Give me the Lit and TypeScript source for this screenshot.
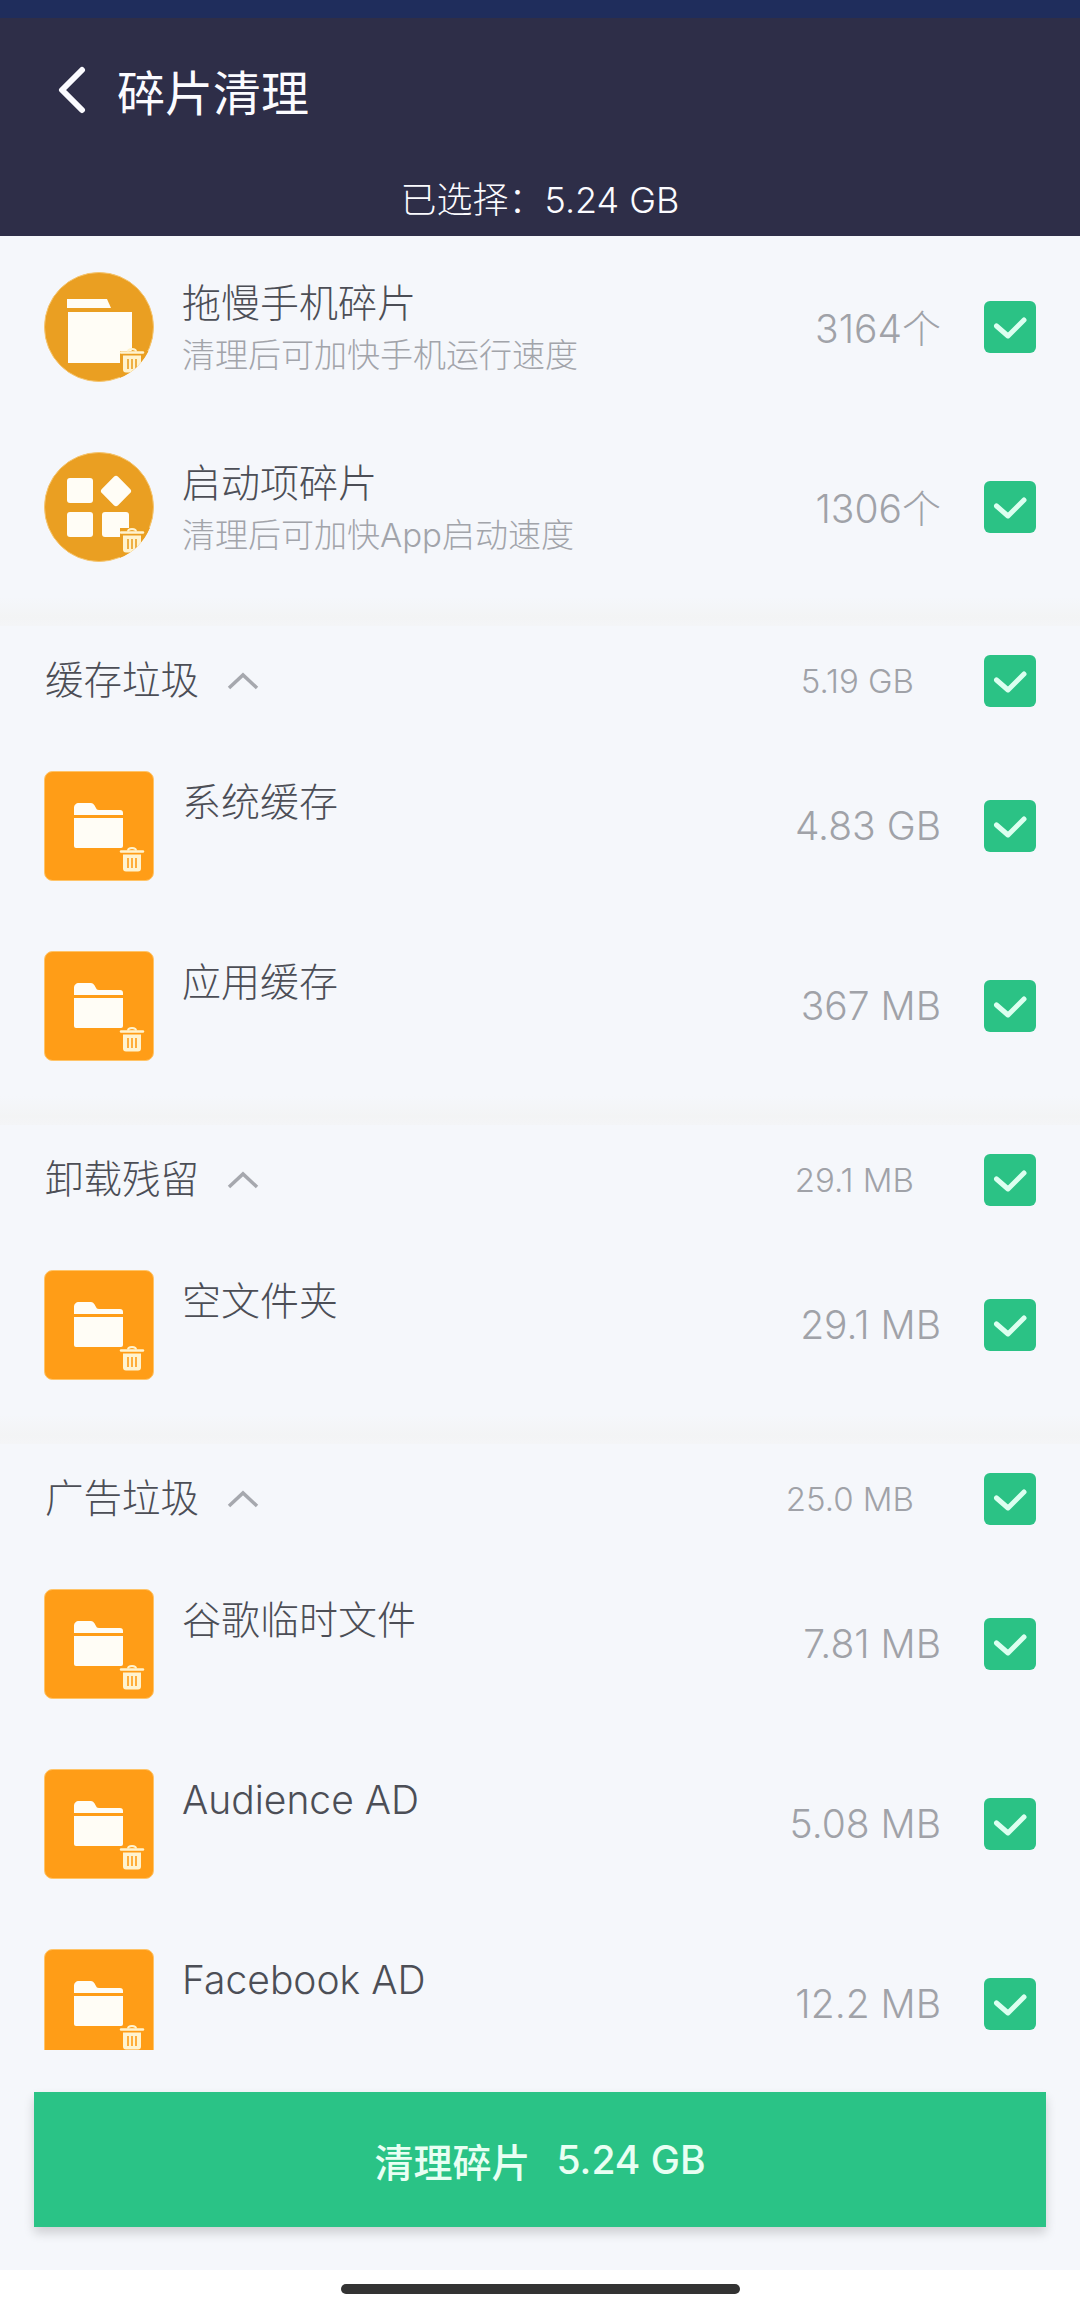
import { LitElement, html, css, svg } from "lit";
import { customElement } from "lit/decorators.js";

const trash = (fill: string, stripe: string) => svg`
  <path d="M77 80.500h22" stroke="${fill}" stroke-width="2.400" stroke-linecap="round" fill="none"/>
  <path d="M84 79.500c0-3.500 8-3.500 8 0" stroke="${fill}" stroke-width="2" fill="none"/>
  <path d="M79 83.500h18v14a3 3 0 0 1-3 3H82a3 3 0 0 1-3-3z" fill="${fill}"/>
  <path d="M84 87v10M88 87v10M92 87v10" stroke="${stripe}" stroke-width="1.600" fill="none"/>`;

const squareIcon = svg`
  <rect x=".5" y=".5" width="109" height="109" rx="8" fill="#ff9d17" stroke="#ffc468"/>
  <path d="M30 44v-7c0-3 2-5 5-5h11c3 0 4 1 6 5 .5 1 1 2 3 2h21c2 0 3 1 3 3v2H30z" fill="#fffdf6"/>
  <path d="M30 47h49v28a2 2 0 0 1-2 2H32a2 2 0 0 1-2-2z" fill="#fffdf6"/>
  ${trash("#fff3cf", "#ff9d17")}`;

const circleClip = svg`<clipPath id="c"><circle cx="55" cy="55" r="55"/></clipPath>`;

const folderCircle = svg`
  ${circleClip}
  <circle cx="55" cy="55" r="54.500" fill="#ea9f22" stroke="#f5c56f"/>
  <path d="M23 27h40l4 9H23z" fill="#fffdf6"/>
  <path d="M24 40h64v38l-10 13H24z" fill="#fffdf6"/>
  <g clip-path="url(#c)"><path d="M76 79h30v31H76z" fill="#ea9f22"/>${trash("#fff3cf", "#ea9f22")}</g>`;

const gridCircle = svg`
  ${circleClip}
  <circle cx="55" cy="55" r="54.500" fill="#ea9f22" stroke="#f5c56f"/>
  <rect x="23" y="26" width="26" height="25" rx="3" fill="#fffdf6"/>
  <rect x="60.500" y="27.500" width="23" height="23" rx="3" transform="rotate(45 72 39)" fill="#fffdf6"/>
  <rect x="23" y="60" width="26" height="25" rx="3" fill="#fffdf6"/>
  <rect x="58" y="60" width="27" height="25" rx="3" fill="#fffdf6"/>
  <g clip-path="url(#c)"><path d="M76 76h30v30H76z" fill="#ea9f22"/>${trash("#fff3cf", "#ea9f22")}</g>`;

const check = html`<span class="check"><svg width="52" height="52" viewBox="0 0 52 52"><path d="M12.500 25L24 35l16-16" fill="none" stroke="#dcfff0" stroke-width="5" stroke-linecap="round" stroke-linejoin="round"/></svg></span>`;

interface Item { title: string; sub?: string; value: string; icon: unknown }
interface Section { title: string; value: string; items: Item[] }

const sections: Section[] = [
  { title: "缓存垃圾", value: "5.19 GB", items: [
    { title: "系统缓存", value: "4.83 GB", icon: squareIcon },
    { title: "应用缓存", value: "367 MB", icon: squareIcon },
  ]},
  { title: "卸载残留", value: "29.1 MB", items: [
    { title: "空文件夹", value: "29.1 MB", icon: squareIcon },
  ]},
  { title: "广告垃圾", value: "25.0 MB", items: [
    { title: "谷歌临时文件", value: "7.81 MB", icon: squareIcon },
    { title: "Audience AD", value: "5.08 MB", icon: squareIcon },
    { title: "Facebook AD", value: "12.2 MB", icon: squareIcon },
  ]},
];

const topItems: Item[] = [
  { title: "拖慢手机碎片", sub: "清理后可加快手机运行速度", value: "3164个", icon: folderCircle },
  { title: "启动项碎片", sub: "清理后可加快App启动速度", value: "1306个", icon: gridCircle },
];

@customElement("app-root")
export class AppRoot extends LitElement {
  static styles = css`
    :host {
      display: flex; flex-direction: column; width: 1080px; height: 2314px;
      background: #fff; overflow: hidden;
      font-family: Inter, "Noto Sans CJK SC", sans-serif;
    }
    .top { background: #2e2e48; height: 236px; flex: none; display: flex; flex-direction: column; }
    .stripe { height: 18px; background: #1f2d5c; flex: none; }
    .bar { display: flex; align-items: center; height: 143px; padding-left: 56px; gap: 29px; color: #fbfbff; font-size: 48px; }
    .bar svg { display: block; }
    .selected { text-align: center; color: #fbfbff; font-size: 36px; line-height: 40px; margin-top: 19px; font-weight: 300; }
    .list { height: 1814px; box-sizing: border-box; padding-top: 1px; flex: none; background: #f5f7fb; overflow: hidden; }
    .sep { height: 29px; background: linear-gradient(#f5f7fb, #f3f4f5 70%, #f4f5f7); }
    .row { height: 180px; box-sizing: border-box; padding: 35px 44px; display: flex; align-items: center; }
    .icon { width: 110px; height: 110px; flex: none; display: block; }
    .text { flex: 1; align-self: flex-start; margin-left: 28px; min-width: 0; }
    .title { font-size: 39px; line-height: 46px; margin-top: 8px; color: #4c4e56; font-weight: 300; }
    .sub { font-size: 33px; line-height: 40px; margin-top: 9px; color: #a2a4aa; font-weight: 300; }
    .value { font-size: 39px; color: #a0a2a8; margin-right: 43px; margin-top: -2px; white-space: nowrap; font-weight: 300; }
    .check { width: 52px; height: 52px; flex: none; border-radius: 6px; background: #2bc285; display: block; }
    .check svg { display: block; }
    .head { height: 110px; box-sizing: border-box; padding: 0 44px; display: flex; align-items: center; }
    .head .name { font-size: 38.500px; color: #4c4e56; margin-left: 1px; line-height: 46px; margin-top: -3px; font-weight: 300; }
    .head svg.chev { margin-left: 27px; display: block; }
    .head .sum { margin-left: auto; margin-right: 70px; font-size: 33px; color: #a0a2a8; white-space: nowrap; font-weight: 300; }
    .footer { flex: none; height: 220px; box-sizing: border-box; background: #f5f7fb; padding: 42px 34px 0; }
    .button {
      height: 135px; background: #2ac386; color: #e8fff3; font-size: 39px;
      display: flex; align-items: center; justify-content: center; gap: 26px;
      box-shadow: 0 6px 10px rgba(0, 0, 0, 0.16); font-weight: 500;
    }
    .home { flex: 1; display: flex; justify-content: center; padding-top: 14px; }
    .home span { width: 399px; height: 10px; border-radius: 5px; background: #333; display: block; }
  `;

  private renderItem(i: Item) {
    return html`<div class="row">
      <svg class="icon" viewBox="0 0 110 110">${i.icon}</svg>
      <div class="text">
        <div class="title">${i.title}</div>
        ${i.sub ? html`<div class="sub">${i.sub}</div>` : null}
      </div>
      <span class="value">${i.value}</span>
      ${check}
    </div>`;
  }

  render() {
    return html`
      <div class="top">
        <div class="stripe"></div>
        <div class="bar">
          <svg width="32" height="48" viewBox="0 0 32 48"><path d="M26 4L6 24l20 20" fill="none" stroke="#fbfbff" stroke-width="6" stroke-linecap="round" stroke-linejoin="round"/></svg>
          <span>碎片清理</span>
        </div>
        <div class="selected">已选择：5.24 GB</div>
      </div>
      <div class="list">
        ${topItems.map((i) => this.renderItem(i))}
        ${sections.map((s) => html`
          <div class="sep"></div>
          <div class="head">
            <span class="name">${s.title}</span>
            <svg class="chev" width="34" height="20" viewBox="0 0 34 20"><path d="M3 17L17 4l14 13" fill="none" stroke="#a6a8ae" stroke-width="3.500"/></svg>
            <span class="sum">${s.value}</span>
            ${check}
          </div>
          ${s.items.map((i) => this.renderItem(i))}
        `)}
      </div>
      <div class="footer"><div class="button"><span>清理碎片</span><span>5.24 GB</span></div></div>
      <div class="home"><span></span></div>
    `;
  }
}
